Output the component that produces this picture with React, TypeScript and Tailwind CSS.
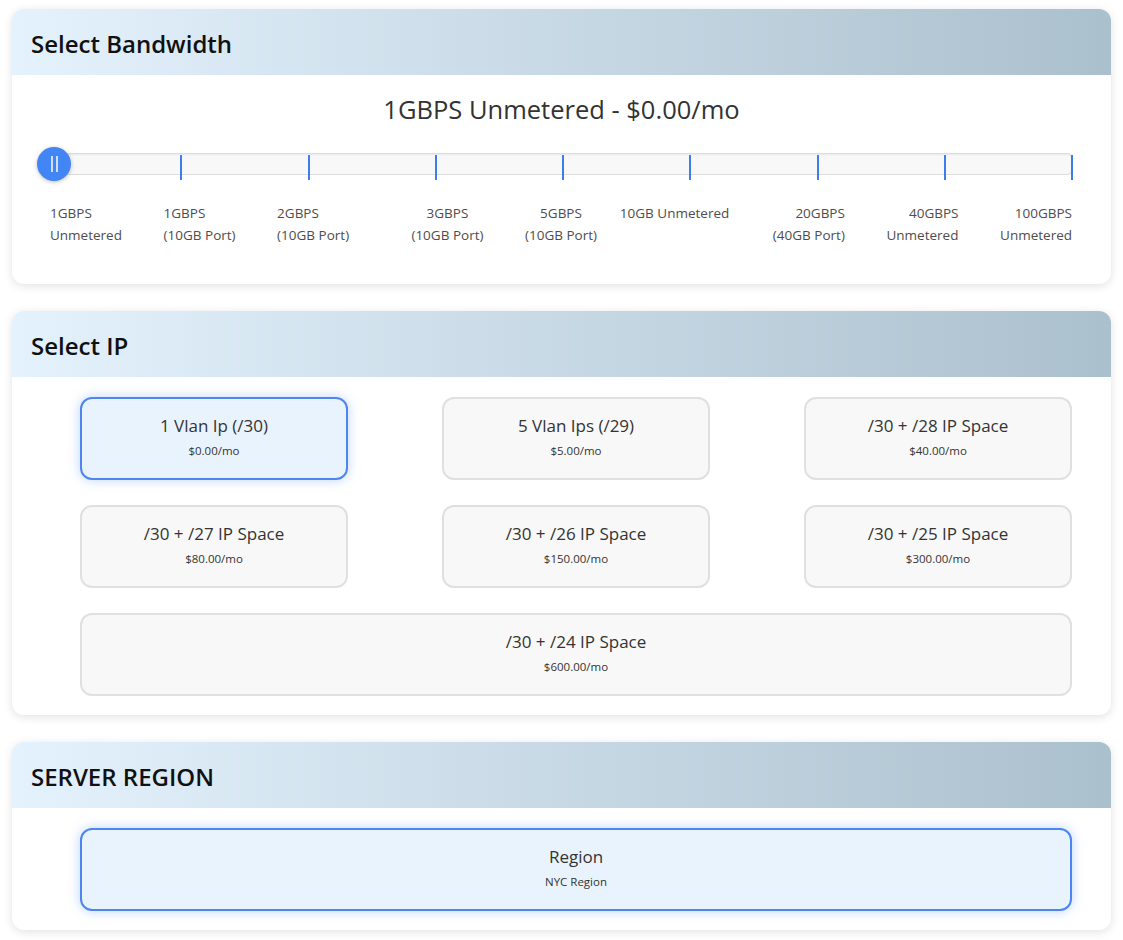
import { useState } from "react";

const bandwidths = [
  { top: "1GBPS", bottom: "Unmetered", title: "1GBPS Unmetered", price: 0 },
  { top: "1GBPS", bottom: "(10GB Port)", title: "1GBPS (10GB Port)", price: 0 },
  { top: "2GBPS", bottom: "(10GB Port)", title: "2GBPS (10GB Port)", price: 0 },
  { top: "3GBPS", bottom: "(10GB Port)", title: "3GBPS (10GB Port)", price: 0 },
  { top: "5GBPS", bottom: "(10GB Port)", title: "5GBPS (10GB Port)", price: 0 },
  { top: "10GB Unmetered", bottom: "", title: "10GB Unmetered", price: 0 },
  { top: "20GBPS", bottom: "(40GB Port)", title: "20GBPS (40GB Port)", price: 0 },
  { top: "40GBPS", bottom: "Unmetered", title: "40GBPS Unmetered", price: 0 },
  { top: "100GBPS", bottom: "Unmetered", title: "100GBPS Unmetered", price: 0 },
];

const ipOptions = [
  { name: "1 Vlan Ip (/30)", price: "$0.00/mo" },
  { name: "5 Vlan Ips (/29)", price: "$5.00/mo" },
  { name: "/30 + /28 IP Space", price: "$40.00/mo" },
  { name: "/30 + /27 IP Space", price: "$80.00/mo" },
  { name: "/30 + /26 IP Space", price: "$150.00/mo" },
  { name: "/30 + /25 IP Space", price: "$300.00/mo" },
  { name: "/30 + /24 IP Space", price: "$600.00/mo" },
];

const labelAlign = (i: number) =>
  i < 3 ? "text-left" : i < 6 ? "text-center" : "text-right";

// thumb centre sits 14px in from the track's left edge, last stop on the right edge
const stopLeft = (i: number) => `calc(14px + (100% - 14px) * ${i / 8})`;

function Section({ title, children }: { title: string; children: React.ReactNode }) {
  return (
    <section className="overflow-hidden rounded-xl bg-white shadow-[0_2px_10px_rgba(0,0,0,0.12)]">
      <div className="flex h-[66px] items-center bg-gradient-to-r from-[#e4f2fd] to-[#abc0cd] px-[19px] pt-[3px]">
        <h2 className="text-[24px] font-semibold text-[#111]">{title}</h2>
      </div>
      {children}
    </section>
  );
}

function OptionCard({
  name,
  price,
  active,
  wide,
  onClick,
}: {
  name: string;
  price: string;
  active: boolean;
  wide?: boolean;
  onClick: () => void;
}) {
  return (
    <button
      type="button"
      onClick={onClick}
      className={`flex h-[83px] flex-col items-center justify-center rounded-xl border-2 pb-[3px] text-[#333] ${
        wide ? "col-span-3" : ""
      } ${
        active
          ? "border-[#4d86ec] bg-[#e9f3fe] shadow-[0_0_12px_rgba(66,133,244,0.35)]"
          : "border-[#e0e0e0] bg-[#f8f8f8]"
      }`}
    >
      <span className="text-[17px] font-medium leading-[22px]">{name}</span>
      <span className="mt-[6px] text-[11.5px] font-medium leading-[16px]">{price}</span>
    </button>
  );
}

export default function App() {
  const [bw, setBw] = useState(0);
  const [ip, setIp] = useState(0);
  const current = bandwidths[bw];

  return (
    <div className="min-h-screen bg-white px-[12px] pt-[9px] font-['Open_Sans',sans-serif]">
      <div className="flex w-[1099px] flex-col gap-[27px]">
        <Section title="Select Bandwidth">
          <div className="px-[28px] pb-[38px] pt-[18px]">
            <p className="text-center text-[25.5px] font-medium leading-[32px] text-[#333]">
              {current.title} - ${current.price.toFixed(2)}/mo
            </p>
            <div className="relative mt-[28px] mr-[11px] h-[26px]">
              <div className="absolute inset-x-0 top-0 h-[22px] rounded-[4px] border border-[#dcdcdc] bg-[#f8f8f8] shadow-[inset_0_1px_2px_rgba(0,0,0,0.06)]" />
              {bandwidths.map((b, i) =>
                i === 0 ? null : (
                  <button
                    key={i}
                    type="button"
                    onClick={() => setBw(i)}
                    className="absolute top-[2px] h-[25px] w-[2px] -translate-x-1/2 bg-[#3b7ded]"
                    style={{ left: stopLeft(i) }}
                    aria-label={b.title}
                  />
                ),
              )}
              <div
                className="absolute top-[11px] flex h-[34px] w-[34px] -translate-x-1/2 -translate-y-1/2 items-center justify-center gap-[3px] rounded-full bg-[#4285f4] shadow-[0_1px_4px_rgba(0,0,0,0.25)]"
                style={{ left: stopLeft(bw) }}
              >
                <span className="h-[16px] w-[2px] bg-white/75" />
                <span className="h-[16px] w-[2px] bg-white/75" />
              </div>
            </div>
            <div className="mt-[23px] ml-[10px] mr-[11px] grid grid-cols-9 items-start text-[13.5px] font-medium leading-[22px] text-[#4d4d4d]">
              {bandwidths.map((b, i) => (
                <div
                  key={i}
                  onClick={() => setBw(i)}
                  className={`${labelAlign(i)} cursor-pointer whitespace-nowrap`}
                >
                  <div>{b.top}</div>
                  {b.bottom && <div>{b.bottom}</div>}
                </div>
              ))}
            </div>
          </div>
        </Section>

        <Section title="Select IP">
          <div className="grid grid-cols-3 gap-x-[94px] gap-y-[25px] pb-[19px] pl-[68px] pr-[39px] pt-[20px]">
            {ipOptions.map((o, i) => (
              <OptionCard
                key={o.name}
                name={o.name}
                price={o.price}
                active={ip === i}
                wide={i === 6}
                onClick={() => setIp(i)}
              />
            ))}
          </div>
        </Section>

        <Section title="SERVER REGION">
          <div className="grid grid-cols-3 pb-[19px] pl-[68px] pr-[39px] pt-[20px]">
            <OptionCard name="Region" price="NYC Region" active wide onClick={() => {}} />
          </div>
        </Section>
      </div>
    </div>
  );
}
